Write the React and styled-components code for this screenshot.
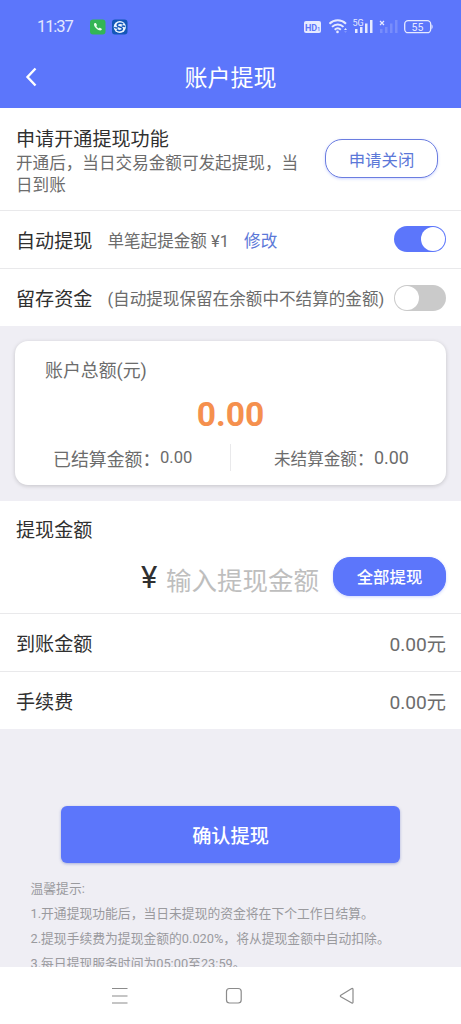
import React from "react";
import styled, { createGlobalStyle } from "styled-components";

const COLORS = {
  primary: "#5c76fb",
  outline: "#6b7de0",
  link: "#5c78d8",
  accent: "#f5904e",
  text: "#303030",
  textLight: "#6c6c6c",
  placeholder: "#bebebe",
  hint: "#9a9a9e",
  border: "#e9e9eb",
  background: "#efeef4",
  white: "#fff",
};

const GlobalStyle = createGlobalStyle`
  *, *::before, *::after {
    box-sizing: border-box;
  }
  body {
    margin: 0;
    font-family: Roboto, "Noto Sans CJK SC", sans-serif;
    color: ${COLORS.text};
  }
  button, input {
    font-family: inherit;
    border: none;
    padding: 0;
  }
`;

const Screen = styled.div`
  width: 461px;
  height: 1024px;
  display: flex;
  flex-direction: column;
  overflow: hidden;
  background: ${COLORS.background};
`;

const Header = styled.header`
  flex: none;
  height: 108px;
  background: ${COLORS.primary};
  color: ${COLORS.white};
`;

const StatusBar = styled.div`
  height: 52px;
  display: flex;
  align-items: center;
  justify-content: space-between;
  padding: 2px 26px 0 37px;
`;

const StatusGroup = styled.div`
  display: flex;
  align-items: center;
`;

const Clock = styled.span`
  width: 53px;
  font-size: 16.5px;
  letter-spacing: -1.1px;
  line-height: 18px;
  color: #e3e8ff;
`;

const AppIcons = styled.svg`
  display: block;
`;

const TitleBar = styled.div`
  height: 56px;
  display: grid;
  grid-template-columns: 61px 1fr 61px;
  align-items: center;
  padding-bottom: 3px;
`;

const BackButton = styled.button`
  background: none;
  color: inherit;
  height: 24px;
  padding-left: 25px;
  text-align: left;
`;

const Title = styled.h1`
  margin: 0;
  font-size: 23px;
  font-weight: 400;
  line-height: 30px;
  text-align: center;
`;

const Content = styled.main`
  flex: 1;
  min-height: 0;
  overflow: hidden;
`;

const Row = styled.div`
  height: ${({ $height, $last }) => $height || ($last ? 57 : 58)}px;
  display: flex;
  align-items: center;
  padding: 0 15px ${({ $last }) => ($last ? 0 : 1)}px 16px;
  background: ${COLORS.white};
  border-bottom: ${({ $last }) => ($last ? 0 : 1)}px solid ${COLORS.border};
`;

const Label = styled.span`
  font-size: 19.1px;
  line-height: 26px;
  white-space: nowrap;

  ${Row} > & {
    padding-top: 5px;
  }
`;

const Detail = styled.span`
  margin-left: 15px;
  padding-top: 5px;
  font-size: 16.6px;
  line-height: 22px;
  white-space: nowrap;
  color: ${({ $link }) => ($link ? COLORS.link : COLORS.textLight)};
`;

const Value = styled.span`
  margin-left: auto;
  padding-top: 1px;
  font-size: 19.2px;
  color: ${COLORS.textLight};
`;

const Intro = styled.div`
  width: 290px;
  padding-top: 6px;
`;

const Description = styled.p`
  margin: 0;
  font-size: 16.6px;
  line-height: 22px;
  color: ${COLORS.textLight};
`;

const PillButton = styled.button`
  flex: none;
  width: 113px;
  height: 39px;
  margin-left: ${({ $outlined }) => ($outlined ? "auto" : 0)};
  margin-right: ${({ $outlined }) => ($outlined ? 8 : 0)}px;
  border-radius: 17px;
  font-size: 16.4px;
  font-weight: ${({ $outlined }) => ($outlined ? 400 : 500)};
  color: ${({ $outlined }) => ($outlined ? COLORS.link : COLORS.white)};
  background: ${({ $outlined }) => ($outlined ? COLORS.white : COLORS.primary)};
  border: 1.5px solid ${({ $outlined }) => ($outlined ? COLORS.outline : COLORS.primary)};
  box-shadow: 0 1px 3px rgba(92, 118, 251, 0.3);
`;

const Track = styled.span`
  flex: none;
  width: 52px;
  height: 26px;
  margin-left: auto;
  padding: 1px;
  display: flex;
  justify-content: ${({ $on }) => ($on ? "flex-end" : "flex-start")};
  border-radius: 13px;
  background: ${({ $on }) => ($on ? COLORS.primary : "#cacaca")};
`;

const Knob = styled.span`
  width: 24px;
  height: 24px;
  border-radius: 50%;
  background: ${COLORS.white};
`;

const Card = styled.section`
  height: 144px;
  margin: 15px 15px 16px;
  padding: 17px 0 0;
  border-radius: 13px;
  background: ${COLORS.white};
  box-shadow: 0 1px 4px rgba(0, 0, 0, 0.18);
`;

const CardTitle = styled.div`
  padding-left: 30px;
  font-size: 17.9px;
  line-height: 26px;
  color: ${COLORS.textLight};
`;

const Total = styled.div`
  margin-top: 11px;
  font-size: 33.6px;
  font-weight: 700;
  line-height: 40px;
  text-align: center;
  color: ${COLORS.accent};
`;

const Split = styled.div`
  display: grid;
  grid-template-columns: 215px 1fr;
  margin-top: 9px;
`;

const SplitItem = styled.div`
  height: 27px;
  display: flex;
  align-items: center;
  padding-left: ${({ $indent }) => $indent}px;
  color: ${COLORS.textLight};
  white-space: nowrap;

  & + & {
    border-left: 1px solid ${COLORS.border};
  }
`;

const SplitText = styled.span`
  font-size: ${({ $size }) => $size}px;
  width: ${({ $width }) => ($width ? `${$width}px` : "auto")};
`;

const AmountSection = styled.section`
  height: 113px;
  padding: 17px 15px 0 16px;
  background: ${COLORS.white};
  border-bottom: 1px solid ${COLORS.border};
`;

const AmountRow = styled.div`
  display: flex;
  align-items: center;
  justify-content: flex-end;
  margin-top: 11px;
`;

const Currency = styled.span`
  width: 25px;
  padding-top: 3px;
  font-size: 31px;
  line-height: 36px;
`;

const AmountInput = styled.input`
  width: 167px;
  height: 42px;
  padding-top: 9px;
  font-size: 25.5px;
  outline: none;
  background: none;

  &::placeholder {
    color: ${COLORS.placeholder};
  }
`;

const ConfirmButton = styled.button`
  display: block;
  width: 339px;
  height: 57px;
  margin: 77px 0 0 61px;
  border-radius: 6px;
  font-size: 19.2px;
  font-weight: 500;
  color: ${COLORS.white};
  background: ${COLORS.primary};
  box-shadow: 0 1px 3px rgba(60, 80, 180, 0.4);
`;

const Hints = styled.div`
  margin-top: 13px;
  padding-left: 30.5px;
  font-size: 12.8px;
  line-height: 25px;
  white-space: nowrap;
  color: ${COLORS.hint};
`;

const NavBar = styled.nav`
  flex: none;
  height: 57px;
  display: flex;
  justify-content: center;
  background: ${COLORS.white};
`;

const StatusText = styled.text`
  font-family: Roboto, sans-serif;
  font-size: ${({ $size }) => $size}px;
  font-weight: ${({ $bold }) => ($bold ? 700 : 400)};
  text-anchor: middle;
`;

const Toggle = ({ on }) => (
  <Track $on={on} role="switch" aria-checked={on}>
    <Knob />
  </Track>
);

const NotificationIcons = () => (
  <AppIcons width="39" height="16" viewBox="0 0 39 16">
    <rect x="0" y="0.5" width="15.5" height="15" rx="3" fill="#33b555" />
    <path
      d="M4.4 4.2c-.9.8-.5 2.9 1.7 5.1s4.4 2.7 5.3 1.8l.4-.6c.2-.3.1-.6-.2-.8l-1.6-.9c-.3-.2-.6-.1-.8.1l-.5.5c-.9-.4-2-1.5-2.4-2.4l.5-.5c.2-.2.3-.5.1-.8l-.9-1.5c-.2-.3-.5-.4-.8-.2z"
      fill="#e8ffee"
    />
    <rect x="22" y="0.5" width="15.5" height="15" rx="3" fill="#1357b8" />
    <circle cx="29.8" cy="8" r="6.1" fill="#eef6ff" />
    <path
      d="M33 5.2C31.5 3.5 27.2 4 27.2 6.3c0 2 5.2 1.4 5.2 3.5 0 2.1-4 2.4-5.6.8M24.5 8c.7 1.5 2 .9 3.4.8M31.7 7.2c1.2-.2 2.3-.4 3.3.5"
      fill="none"
      stroke="#1357b8"
      strokeWidth="1.5"
    />
  </AppIcons>
);

const SystemIcons = () => (
  <AppIcons width="131" height="18" viewBox="304 18 131 18" fill="#e6eaff">
    <rect x="304" y="21" width="17" height="12" rx="2" />
    <StatusText x="311" y="30.5" $size={9} $bold fill={COLORS.primary}>HD</StatusText>
    <StatusText x="318.7" y="30.5" $size={5} $bold fill={COLORS.primary}>1</StatusText>
    <g fill="none" stroke="#e6eaff" strokeWidth="2">
      <path d="M329.5 23.8c4.7-4.6 11.8-4.6 16.5 0" />
      <path d="M332 26.9c3.4-3.3 8.1-3.3 11.5 0" />
      <path d="M334.7 29.7c1.8-1.7 4.3-1.7 6.1 0" />
    </g>
    <circle cx="337.5" cy="31.9" r="1.3" />
    <path d="M344 30l1.5-2 1.5 2z" />
    <path d="M344 31l1.500 2 1.500-2z" opacity="0.25" />
    <StatusText x="358" y="25.500" $size={9}>5G</StatusText>
    <rect x="355" y="29" width="2.5" height="4" />
    <rect x="360" y="27" width="2.5" height="6" />
    <rect x="365" y="23.5" width="2.5" height="9.5" />
    <rect x="370" y="20" width="2.5" height="13" />
    <path d="M380 21l4 4m0-4l-4 4" stroke="#e6eaff" strokeWidth="1.2" />
    <g opacity="0.2">
      <rect x="380" y="29" width="2.5" height="4" />
      <rect x="385" y="27" width="2.5" height="6" />
      <rect x="390" y="23.5" width="2.5" height="9.5" />
      <rect x="395" y="20" width="2.5" height="13" />
    </g>
    <rect x="404.7" y="20.7" width="26" height="12" rx="3.5" fill="none" stroke="#e6eaff" strokeWidth="1.3" />
    <path d="M431.5 24.5c1.5.5 1.5 4 0 4.5z" />
    <StatusText x="417.5" y="30.5" $size={10.5}>55</StatusText>
  </AppIcons>
);

const App = () => {
  return (
    <Screen lang="zh-CN">
      <GlobalStyle />
      <Header>
        <StatusBar>
          <StatusGroup>
            <Clock>11:37</Clock>
            <NotificationIcons />
          </StatusGroup>
          <SystemIcons />
        </StatusBar>
        <TitleBar>
          <BackButton aria-label="返回">
            <svg width="14" height="20" viewBox="0 0 14 20" fill="none" stroke="#fff" strokeWidth="2.4">
              <path d="M10.5 1.5L2.5 10l8 8.5" />
            </svg>
          </BackButton>
          <Title>账户提现</Title>
        </TitleBar>
      </Header>

      <Content>
        <Row $height={103}>
          <Intro>
            <Label>申请开通提现功能</Label>
            <Description>开通后，当日交易金额可发起提现，当日到账</Description>
          </Intro>
          <PillButton $outlined>申请关闭</PillButton>
        </Row>
        <Row>
          <Label>自动提现</Label>
          <Detail>单笔起提金额 ¥1</Detail>
          <Detail $link>修改</Detail>
          <Toggle on />
        </Row>
        <Row $last>
          <Label>留存资金</Label>
          <Detail>(自动提现保留在余额中不结算的金额)</Detail>
          <Toggle on={false} />
        </Row>

        <Card>
          <CardTitle>账户总额(元)</CardTitle>
          <Total>0.00</Total>
          <Split>
            <SplitItem $indent={38}>
              <SplitText $size={17.9} $width={107}>已结算金额：</SplitText>
              <SplitText $size={16.6}>0.00</SplitText>
            </SplitItem>
            <SplitItem $indent={43}>
              <SplitText $size={16.6} $width={100}>未结算金额：</SplitText>
              <SplitText $size={17.9}>0.00</SplitText>
            </SplitItem>
          </Split>
        </Card>

        <AmountSection>
          <Label>提现金额</Label>
          <AmountRow>
            <Currency>¥</Currency>
            <AmountInput placeholder="输入提现金额" />
            <PillButton>全部提现</PillButton>
          </AmountRow>
        </AmountSection>
        <Row>
          <Label>到账金额</Label>
          <Value>0.00元</Value>
        </Row>
        <Row $last>
          <Label>手续费</Label>
          <Value>0.00元</Value>
        </Row>

        <ConfirmButton>确认提现</ConfirmButton>
        <Hints>
          <div>温馨提示:</div>
          <div>1.开通提现功能后，当日未提现的资金将在下个工作日结算。</div>
          <div>2.提现手续费为提现金额的0.020%，将从提现金额中自动扣除。</div>
          <div>3.每日提现服务时间为05:00至23:59。</div>
        </Hints>
      </Content>

      <NavBar>
        <svg width="461" height="57" viewBox="0 967 461 57" fill="none" stroke="#8b8b8b" strokeWidth="1.2">
          <path d="M112 988.5h15.5M112 996h15.5M112 1003h15.5" />
          <rect x="226.5" y="988.5" width="14.7" height="14.5" rx="3" />
          <path d="M353 989.3v13c0 .7-.6 1-1.2.7l-11-6.3c-.6-.4-.6-1 0-1.4l11-6.7c.6-.3 1.2 0 1.2.7z" />
        </svg>
      </NavBar>
    </Screen>
  );
};

export default App;
